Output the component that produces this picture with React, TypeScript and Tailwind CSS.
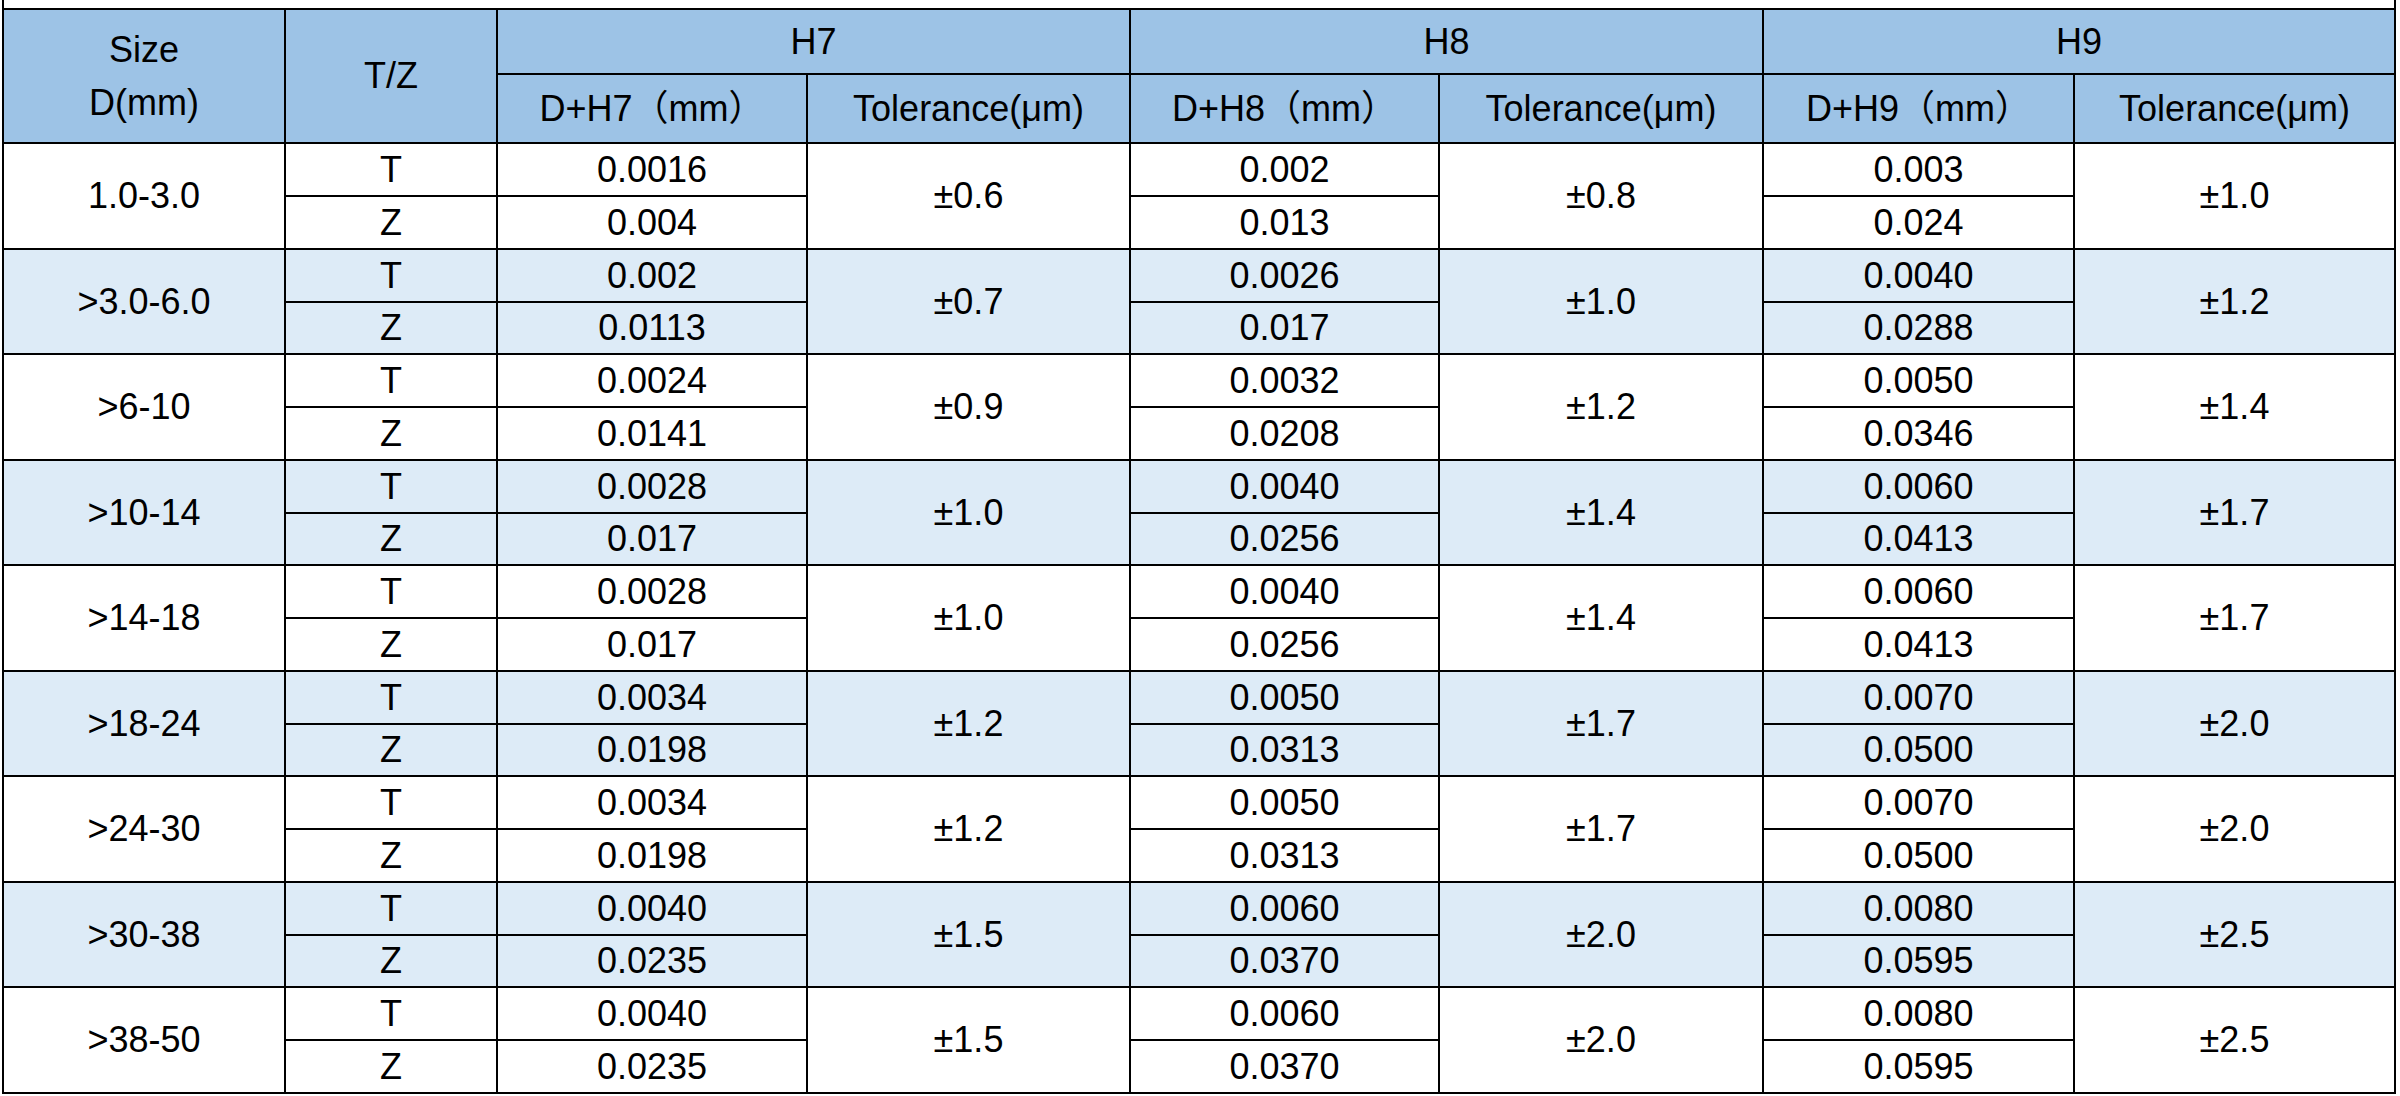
const rows = [
  { size: "1.0-3.0", h7: ["0.0016", "0.004", "±0.6"], h8: ["0.002", "0.013", "±0.8"], h9: ["0.003", "0.024", "±1.0"] },
  { size: ">3.0-6.0", h7: ["0.002", "0.0113", "±0.7"], h8: ["0.0026", "0.017", "±1.0"], h9: ["0.0040", "0.0288", "±1.2"] },
  { size: ">6-10", h7: ["0.0024", "0.0141", "±0.9"], h8: ["0.0032", "0.0208", "±1.2"], h9: ["0.0050", "0.0346", "±1.4"] },
  { size: ">10-14", h7: ["0.0028", "0.017", "±1.0"], h8: ["0.0040", "0.0256", "±1.4"], h9: ["0.0060", "0.0413", "±1.7"] },
  { size: ">14-18", h7: ["0.0028", "0.017", "±1.0"], h8: ["0.0040", "0.0256", "±1.4"], h9: ["0.0060", "0.0413", "±1.7"] },
  { size: ">18-24", h7: ["0.0034", "0.0198", "±1.2"], h8: ["0.0050", "0.0313", "±1.7"], h9: ["0.0070", "0.0500", "±2.0"] },
  { size: ">24-30", h7: ["0.0034", "0.0198", "±1.2"], h8: ["0.0050", "0.0313", "±1.7"], h9: ["0.0070", "0.0500", "±2.0"] },
  { size: ">30-38", h7: ["0.0040", "0.0235", "±1.5"], h8: ["0.0060", "0.0370", "±2.0"], h9: ["0.0080", "0.0595", "±2.5"] },
  { size: ">38-50", h7: ["0.0040", "0.0235", "±1.5"], h8: ["0.0060", "0.0370", "±2.0"], h9: ["0.0080", "0.0595", "±2.5"] },
];

const cell = "border-2 border-black text-center align-middle p-0";

export default function App() {
  return (
    <div
      className="bg-white pl-[2px] text-black text-[36px] leading-none"
      style={{ fontFamily: '"Liberation Sans", "Noto Sans CJK SC", sans-serif' }}
    >
      {/* cut-off row above the table */}
      <div className="h-[8px] w-[2394px] border-x-2 border-black" />
      <table className="w-[2394px] table-fixed border-collapse">
        <colgroup>
          <col className="w-[282px]" />
          <col className="w-[212px]" />
          <col className="w-[310px]" />
          <col className="w-[323px]" />
          <col className="w-[309px]" />
          <col className="w-[324px]" />
          <col className="w-[311px]" />
          <col className="w-[321px]" />
        </colgroup>
        <thead className="bg-[#9dc3e6]">
          <tr className="h-[65px]">
            <th rowSpan={2} className={`${cell} font-normal`}>
              <div className="flex flex-col items-center gap-[17px]">
                <span>Size</span>
                <span>D(mm)</span>
              </div>
            </th>
            <th rowSpan={2} className={`${cell} font-normal`}>T/Z</th>
            <th colSpan={2} className={`${cell} font-normal`}>H7</th>
            <th colSpan={2} className={`${cell} font-normal`}>H8</th>
            <th colSpan={2} className={`${cell} font-normal`}>H9</th>
          </tr>
          <tr className="h-[69px]">
            <th className={`${cell} font-normal`}>D+H7（mm）</th>
            <th className={`${cell} font-normal`}>Tolerance(μm)</th>
            <th className={`${cell} font-normal`}>D+H8（mm）</th>
            <th className={`${cell} font-normal`}>Tolerance(μm)</th>
            <th className={`${cell} font-normal`}>D+H9（mm）</th>
            <th className={`${cell} font-normal`}>Tolerance(μm)</th>
          </tr>
        </thead>
        <tbody>
          {rows.map((r, i) => {
            const bg = i % 2 === 1 ? "bg-[#ddebf7]" : "bg-white";
            const zh = i % 2 === 1 ? "h-[52px]" : "h-[53px]";
            return [
              <tr key={`${r.size}-t`} className={`h-[53px] ${bg}`}>
                <td rowSpan={2} className={cell}>{r.size}</td>
                <td className={cell}>T</td>
                <td className={cell}>{r.h7[0]}</td>
                <td rowSpan={2} className={cell}>{r.h7[2]}</td>
                <td className={cell}>{r.h8[0]}</td>
                <td rowSpan={2} className={cell}>{r.h8[2]}</td>
                <td className={cell}>{r.h9[0]}</td>
                <td rowSpan={2} className={cell}>{r.h9[2]}</td>
              </tr>,
              <tr key={`${r.size}-z`} className={`${zh} ${bg}`}>
                <td className={cell}>Z</td>
                <td className={cell}>{r.h7[1]}</td>
                <td className={cell}>{r.h8[1]}</td>
                <td className={cell}>{r.h9[1]}</td>
              </tr>,
            ];
          })}
        </tbody>
      </table>
    </div>
  );
}
